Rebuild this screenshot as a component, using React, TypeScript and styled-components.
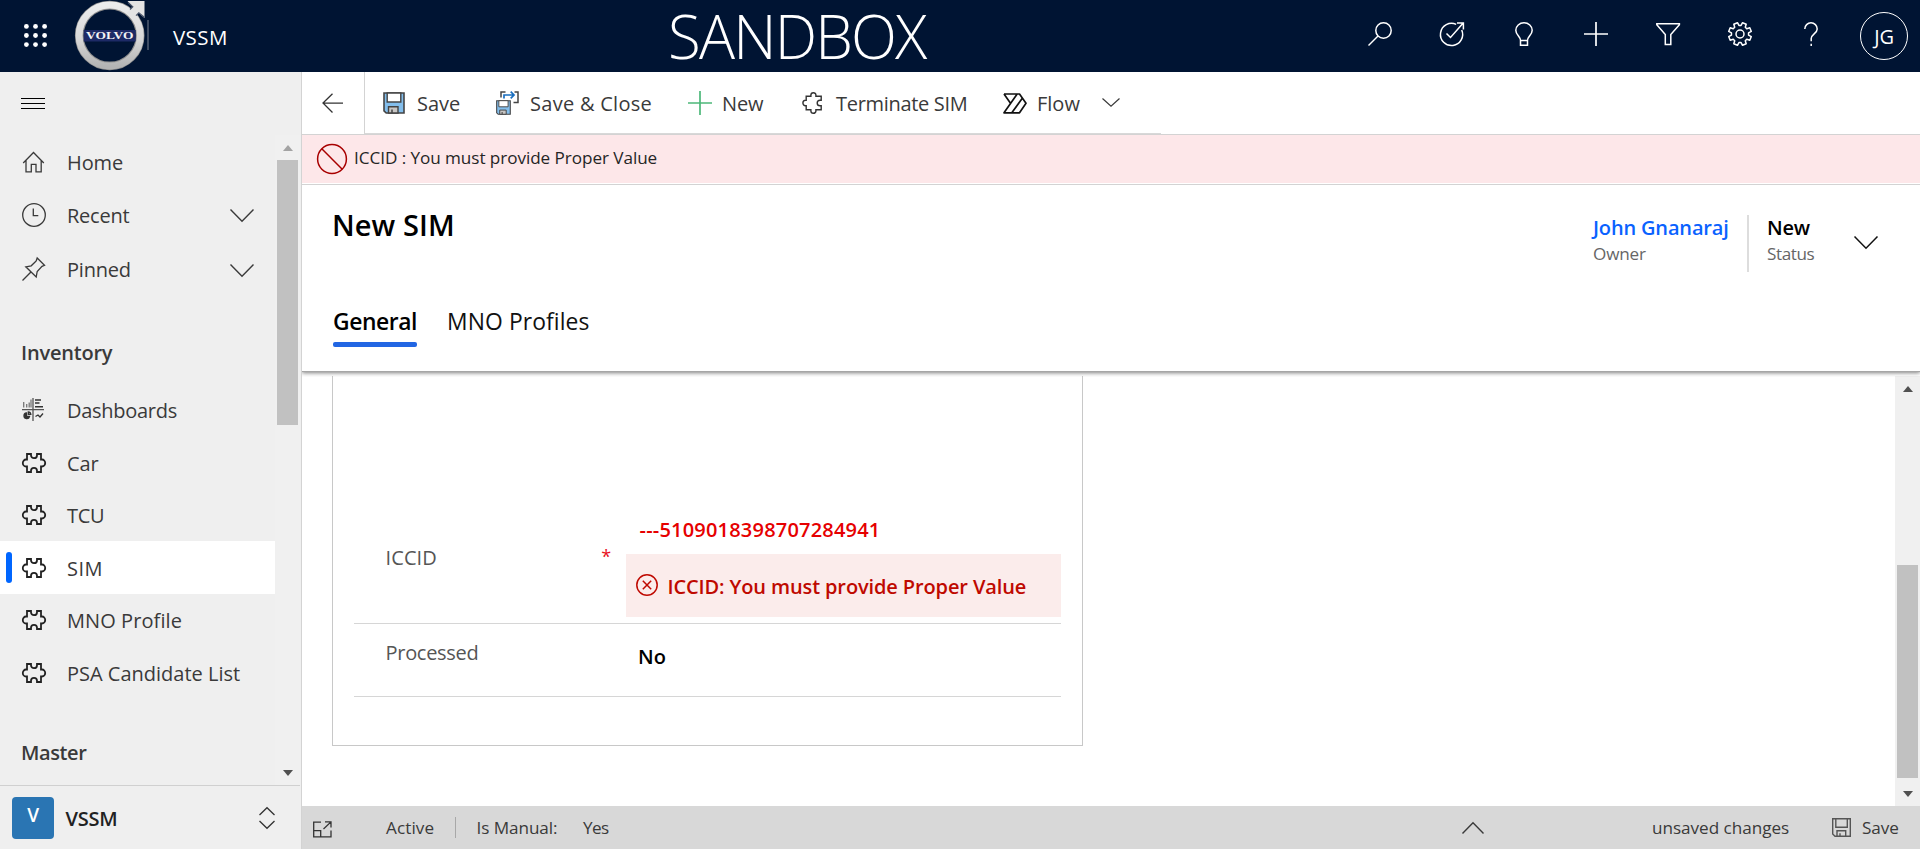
import React from 'react';
import styled, { createGlobalStyle } from 'styled-components';

const GlobalStyle = createGlobalStyle`
  * { box-sizing: border-box; }
  body {
    margin: 0;
    background: #fff;
    font-family: 'Open Sans', 'Noto Sans', sans-serif;
    font-size: 20px;
    color: #3a3a3a;
    overflow: hidden;
  }
  svg { display: block; flex: none; overflow: visible; }
`;

/* ---------- shared ---------- */

const Text = styled.span<{ $ls?: number; $size?: number; $weight?: number; $color?: string; $drop?: number }>`
  white-space: nowrap;
  line-height: 1.3;
  font-size: ${p => p.$size ?? 20}px;
  font-weight: ${p => p.$weight ?? 400};
  letter-spacing: ${p => p.$ls ?? -0.1}px;
  color: ${p => p.$color ?? 'inherit'};
  padding-top: ${p => p.$drop ?? 0}px;
`;

const Page = styled.div`
  width: 1920px;
  height: 849px;
  display: flex;
  flex-direction: column;
`;

const Body = styled.div`
  flex: 1;
  display: flex;
  min-height: 0;
`;

/* ---------- top bar ---------- */

const TopBar = styled.header`
  height: 72px;
  flex: none;
  display: flex;
  align-items: center;
  background: #001433;
  color: #fff;
`;

const Brand = styled.div`
  width: 670px;
  height: 72px;
  display: flex;
  align-items: center;
  padding-left: 24px;
`;

const LogoSlot = styled.div`
  margin-left: 27px;
  width: 72px;
  height: 72px;
`;

const BrandRule = styled.div`
  width: 2px;
  height: 30px;
  margin: 0 24px 2px 0;
  background: #3d4b62;
`;

const EnvironmentName = styled.div`
  flex: 1;
  font-size: 60px;
  font-weight: 300;
  line-height: 72px;
  letter-spacing: -1.8px;
  margin-left: -2px;
`;

const TopActions = styled.div`
  display: flex;
  align-items: center;
  padding-right: 12px;
`;

const TopAction = styled.div`
  width: 72px;
  height: 72px;
  display: flex;
  justify-content: center;
  padding-top: 22px;
`;

const Avatar = styled.div`
  width: 48px;
  height: 48px;
  margin-left: 12px;
  border: 1.3px solid #fff;
  border-radius: 50%;
  display: flex;
  align-items: center;
  justify-content: center;
  padding-top: 1px;
`;

/* ---------- sidebar ---------- */

const Sidebar = styled.nav`
  width: 302px;
  flex: none;
  display: flex;
  flex-direction: column;
  background: #efefef;
  border-right: 1px solid #d3d3d3;
`;

const MenuToggle = styled.div`
  height: 63px;
  flex: none;
  display: flex;
  flex-direction: column;
  gap: 4px;
  padding: 26px 0 0 21px;
`;

const MenuLine = styled.div`
  width: 24px;
  height: 1px;
  background: #000;
`;

const NavScroll = styled.div`
  flex: 1;
  min-height: 0;
  display: flex;
`;

const NavList = styled.div`
  width: 275px;
  overflow: hidden;
`;

const NavRow = styled.div<{ $active?: boolean; $height?: number }>`
  height: ${p => p.$height ?? 52.5}px;
  display: flex;
  align-items: center;
  padding: 1px 21px 0 6px;
  background: ${p => (p.$active ? '#fff' : 'transparent')};
`;

const NavMarker = styled.div<{ $active?: boolean }>`
  width: 6px;
  height: 31px;
  margin-right: 10px;
  border-radius: 3px;
  background: ${p => (p.$active ? '#0066ff' : 'transparent')};
`;

const NavIcon = styled.div`
  width: 45px;
  flex: none;
`;

const NavLabel = styled(Text)`
  flex: 1;
`;

const NavHeading = styled.div<{ $top: number; $height: number }>`
  height: ${p => p.$height}px;
  margin-top: ${p => p.$top}px;
  padding: 0 0 4px 21px;
  display: flex;
  align-items: center;
`;

const AreaSwitcher = styled.div`
  height: 64px;
  flex: none;
  width: 300px;
  border-top: 1px solid #d0d0d0;
  display: flex;
  align-items: center;
  padding: 0 25px 0 12px;
`;

const AreaTile = styled.div`
  width: 42px;
  height: 42px;
  border-radius: 4px;
  background: #2a75b3;
  color: #fff;
  display: flex;
  align-items: center;
  justify-content: center;
  padding-bottom: 5px;
  margin-right: 11.5px;
`;

const AreaName = styled.div`
  flex: 1;
  display: flex;
  padding-top: 2px;
`;

/* ---------- scrollbars ---------- */

const Track = styled.div`
  width: 25px;
  flex: none;
  background: #f0f0f0;
  display: flex;
  flex-direction: column;
  align-items: center;
`;

const Arrow = styled.div<{ $down?: boolean; $color: string }>`
  height: 25px;
  flex: none;
  display: flex;
  align-items: center;
  &::before {
    content: '';
    border-left: 5.5px solid transparent;
    border-right: 5.5px solid transparent;
    ${p => (p.$down ? 'border-top' : 'border-bottom')}: 6px solid ${p => p.$color};
  }
`;

const Thumb = styled.div<{ $before: number; $length: number }>`
  width: 21px;
  height: ${p => p.$length}px;
  margin-top: ${p => p.$before}px;
  background: #c1c1c1;
`;

const TrackRest = styled.div`
  flex: 1;
`;

/* ---------- main ---------- */

const Main = styled.main`
  flex: 1;
  min-width: 0;
  display: flex;
  flex-direction: column;
  background: #fff;
`;

const CommandBar = styled.div`
  height: 63px;
  flex: none;
  display: flex;
  align-items: flex-start;
  border-bottom: 1px solid #d3d3d3;
`;

const BackButton = styled.div`
  width: 62px;
  height: 62px;
  display: flex;
  padding: 20.5px 0 0 20px;
`;

const Commands = styled.div`
  display: flex;
  height: 62px;
  border-left: 1px solid #d3d3d3;
  border-bottom: 1px solid #d8d8d8;
`;

const Command = styled.div<{ $width: number }>`
  width: ${p => p.$width}px;
  height: 62px;
  padding: 0 0 0 18px;
  display: flex;
  align-items: center;
`;

const CommandIcon = styled.div`
  width: 24px;
  height: 24px;
  margin: 0 10px 0 0;
  display: flex;
  align-items: center;
`;

const CommandCaret = styled.div`
  margin-left: 22px;
  padding-bottom: 2px;
`;

const ErrorBanner = styled.div`
  height: 48px;
  flex: none;
  display: flex;
  align-items: center;
  gap: 6.5px;
  padding: 0 0 1px 13.5px;
  background: #fde7e9;
`;

const FormHeader = styled.div`
  height: 187px;
  flex: none;
  margin-top: 1px;
  border-top: 1px solid #d3d3d3;
  display: flex;
  justify-content: space-between;
  box-shadow: 0 1px 0 #a6a6a6, 0 2px 4px rgba(0, 0, 0, 0.5);
  clip-path: inset(0 0 -6px 0);
  background: #fff;
`;

const TitleColumn = styled.div`
  padding: 21px 0 0 31px;
  display: flex;
  flex-direction: column;
`;

const Title = styled.div`
  display: flex;
  margin-left: -1px;
`;

const Tabs = styled.div`
  display: flex;
  margin-top: 63px;
  gap: 30px;
`;

const TabBlock = styled.div`
  display: flex;
  flex-direction: column;
`;

const TabUnderline = styled.div`
  width: 84px;
  height: 5px;
  margin-top: 6px;
  border-radius: 2px;
  background: #2266e3;
`;

const HeaderFields = styled.div`
  display: flex;
  align-items: flex-start;
  padding: 30px 42px 0 0;
`;

const HeaderField = styled.div<{ $width: number }>`
  width: ${p => p.$width}px;
  padding-left: 1px;
  display: flex;
  flex-direction: column;
`;

const HeaderRule = styled.div`
  width: 2px;
  height: 57px;
  margin-right: 17px;
  background: #ddd;
`;

const HeaderCaret = styled.div`
  padding-top: 21px;
  color: #111;
`;

const FormScroll = styled.div`
  flex: 1;
  min-height: 0;
  display: flex;
  justify-content: space-between;
  padding-top: 5px;
`;

const Section = styled.section`
  width: 751px;
  height: 370px;
  margin-left: 30px;
  padding: 128px 21px 0;
  border: 1px solid #c8c8c8;
  border-top: 0;
`;

const FieldRow = styled.div<{ $height: number }>`
  height: ${p => p.$height}px;
  border-bottom: 1px solid #d6d6d6;
  display: flex;
`;

const FieldLabel = styled.div<{ $top: number }>`
  width: 272px;
  flex: none;
  padding: ${p => p.$top}px 15px 0 31.5px;
  display: flex;
  justify-content: space-between;
  color: #555;
`;

const FieldValue = styled.div<{ $top: number }>`
  flex: 1;
  padding-top: ${p => p.$top}px;
  display: flex;
  flex-direction: column;
`;

const FieldText = styled.div<{ $left?: number }>`
  padding-left: ${p => p.$left ?? 12}px;
  display: flex;
`;

const FieldError = styled.div`
  height: 63px;
  margin-top: 11px;
  padding-left: 10px;
  display: flex;
  align-items: center;
  gap: 9.5px;
  background: #fbeceb;
`;

const StatusBar = styled.footer`
  height: 43px;
  flex: none;
  display: flex;
  align-items: center;
  background: #d8d8d8;
`;

const StatusCell = styled.div<{ $width: number }>`
  width: ${p => p.$width}px;
  flex: none;
  display: flex;
`;

const PopOutCell = styled(StatusCell)`
  padding: 3px 0 0 11px;
`;

const StatusRule = styled.div`
  width: 1px;
  height: 21px;
  margin-right: 20.5px;
  background: #a8a8a8;
`;

/* ---------- icons ---------- */

const Waffle = () => (
  <svg width="24" height="24" fill="#fff">
    {[2.4, 11.5, 20.6].map(y => [2.4, 11.5, 20.6].map(x => <circle key={`${x}-${y}`} cx={x} cy={y} r="2.4" />))}
  </svg>
);

const Logo = () => (
  <svg width="72" height="72" viewBox="0 0 72 72">
    <defs>
      <linearGradient id="steel" x1="0" y1="0" x2="0" y2="1">
        <stop offset="0" stopColor="#ececec" />
        <stop offset="0.55" stopColor="#d8d8d8" />
        <stop offset="1" stopColor="#b4b4b4" />
      </linearGradient>
    </defs>
    <circle cx="34.700" cy="35.500" r="30.400" fill="#001433" stroke="#8e8e8e" strokeWidth="8.800" />
    <circle cx="34.700" cy="35.500" r="30.600" fill="none" stroke="url(#steel)" strokeWidth="7" />
    <path d="M52.500 1h17v17l-5.800-5-6.400 6.500-6-6.200 6.500-6.500z" fill="#e4e4e4" />
    <path d="M53 2.500l4.800 4.200-2.800 2.800M69 17l-5.200-4.300-2.800 2.900" fill="none" stroke="#4a566b" strokeWidth="1.200" />
    <rect x="8.700" y="30" width="52" height="11.500" fill="#1d2a66" />
    <text x="11" y="39.200" textLength="47.500" lengthAdjust="spacingAndGlyphs" fontFamily="'Liberation Serif', serif" fontWeight="700" fontSize="10" fill="#f4f4f4">VOLVO</text>
  </svg>
);

const line = { fill: 'none', stroke: 'currentColor', strokeWidth: 1.5 } as const;

const SearchIcon = () => (
  <svg width="24" height="24" {...line}>
    <circle cx="15.500" cy="8.500" r="7.700" /><path d="M10 14L0.500 23.500" />
  </svg>
);
const TargetIcon = () => (
  <svg width="24" height="24" {...line}>
    <path d="M16.200 2.400A11.100 11.100 0 1 0 21.700 8" /><path d="M6.500 11.500l4 4L23 1.200M17 1h6.400v6.400" />
  </svg>
);
const BulbIcon = () => (
  <svg width="19" height="24" {...line}>
    <path d="M5.500 18.500c0-4-4.700-5.500-4.700-10.200a8.200 7.600 0 0 1 16.400 0c0 4.700-4.700 6.200-4.700 10.200v4.700h-7zM5.500 18.500h7" />
  </svg>
);
const PlusIcon = ({ color = '#fff' }: { color?: string }) => (
  <svg width="24" height="24" fill="none" stroke={color} strokeWidth="1.700"><path d="M12 0v24M0 12h24" /></svg>
);
const FunnelIcon = () => (
  <svg width="24" height="24" {...line}><path d="M0.800 1.800h22.600v1L14.800 12.500v10H9.300v-10L0.800 2.800z" /></svg>
);
const GearIcon = () => {
  const pts: string[] = [];
  for (let i = 0; i < 8; i++) {
    const a = (i * Math.PI) / 4 + Math.PI / 8;
    [[-0.27, 8.6], [-0.17, 11.6], [0.17, 11.6], [0.27, 8.6]].forEach(([d, r]) =>
      pts.push(`${(12 + r * Math.cos(a + d)).toFixed(2)},${(12 + r * Math.sin(a + d)).toFixed(2)}`));
  }
  return (
    <svg width="24" height="24" {...line}>
      <polygon points={pts.join(' ')} strokeLinejoin="round" /><circle cx="12" cy="12" r="4" />
    </svg>
  );
};
const QuestionIcon = () => (
  <svg width="16" height="24" {...line}>
    <path d="M0.800 7a6.200 6.200 0 1 1 12.400 0c0 4.600-6 5.200-6 9.600v2.600M7.200 21.800v2.200" />
  </svg>
);

const Chevron = ({ w, h, up, sw = 1.4 }: { w: number; h: number; up?: boolean; sw?: number }) => (
  <svg width={w} height={h} fill="none" stroke="currentColor" strokeWidth={sw}>
    <path d={up ? `M0.500 ${h - 0.5}L${w / 2} 0.700L${w - 0.5} ${h - 0.5}` : `M0.500 0.500L${w / 2} ${h - 0.7}L${w - 0.5} 0.500`} />
  </svg>
);

const HomeIcon = () => (
  <svg width="22" height="22" viewBox="0 0 22 22" {...line} strokeWidth={1.3}>
    <path d="M0.700 11L11 0.500 21.300 11M3.500 8.500v11.300h5.300v-7.500h4.700v7.500h5.200V8.500" transform="translate(0.5 0)" />
  </svg>
);
const ClockIcon = () => (
  <svg width="24" height="24" {...line} strokeWidth={1.3}><circle cx="12" cy="11" r="11.300" /><path d="M11.300 4.500v7.200h5" /></svg>
);
const PinIcon = () => (
  <svg width="24" height="24" {...line} strokeWidth={1.3}>
    <path d="M15.200 0L22.500 7.300 20 8.300l-4.800 5.200-1 5.500L3.800 8.800l5.400-1L14.200 3zM8.700 14.200L0.500 22.500" />
  </svg>
);
const DashboardIcon = () => (
  <svg width="22" height="24" viewBox="0 0 22 24" fill="none" stroke="#333" strokeWidth="1.300">
    <path d="M11 0v23M0 11.700h22" stroke="#555" />
    <path d="M1.700 9.500V4M4.700 9.500V6M7.200 9.500V4.500M9 9.500V1.500" stroke="#777" />
    <path d="M13 2h6M13 5h4.500M13 8.700h8" strokeWidth="1.600" />
    <path d="M4.500 15a2.800 2.800 0 1 0 3 3.500h-3z" fill="#333" />
    <path d="M6.300 14v2.300h2.500a2.600 2.600 0 0 0-2.500-2.300zM13.500 18.500l2.500-1.500 2 2 3-3.500" />
  </svg>
);
const PuzzleIcon = () => (
  <svg width="24" height="20" fill="none" stroke="#222" strokeWidth="1.800">
    <path d="M5 1h4v1.200a3 3 0 0 0 6 0V1h4v5.500h1a3.200 3.500 0 0 1 0 7h-1V19h-4v-1.200a3 3 0 0 0-6 0V19H5v-5.500H4a3.200 3.500 0 0 1 0-7h1z" />
  </svg>
);
const PuzzleUprightIcon = () => (
  <svg width="20" height="22" viewBox="-0.700 0 20 22" fill="none" stroke="#333" strokeWidth="1.400">
    <path d="M3.500 4.200h4.700V3a2.500 2.300 0 0 1 5 0v1.200H18.500v4h-1.200a2.700 2.700 0 0 0 0 5.600h1.200v4h-5.300V19a2.500 2.300 0 0 1-5 0v-1.200H3.500v-4H2.800a2.600 2.800 0 0 1 0-5.600h0.700z" />
  </svg>
);
const BackIcon = () => (
  <svg width="22" height="20" fill="none" stroke="#333" strokeWidth="1.300"><path d="M10.500 0.700L1 10l9.500 9.500M1 10.200h20" /></svg>
);
const DiskShape = () => (
  <>
    <path d="M1 1h20v20H3.200L1 18.800z" fill="#83beec" stroke="#444" strokeWidth="1.600" />
    <path d="M4.200 1h13.600v9H4.200z" fill="#fff" stroke="#444" strokeWidth="1.400" />
    <path d="M5.500 21v-6.200h9.500V21z" fill="#c8c6c4" stroke="#444" strokeWidth="1.400" />
    <path d="M9 21v-3.500" stroke="#444" strokeWidth="1.500" />
  </>
);
const DiskIcon = () => <svg width="22" height="22" viewBox="0 0 22 22"><DiskShape /></svg>;
const SaveCloseIcon = () => (
  <svg width="24" height="24" viewBox="0 0 24 24" fill="none" stroke="#444" strokeWidth="1.500">
    <path d="M5 6.500V1h4.500M18.500 1H22v10.500h-4.500" />
    <path d="M8 7.500V4h10M14.700 0.700L18 4l-3.300 3.300" stroke="#1a6fc0" strokeWidth="1.700" />
    <g transform="translate(0 9) scale(0.68)"><DiskShape /></g>
  </svg>
);
const FlowIcon = () => (
  <svg width="24" height="21" fill="none" stroke="#111" strokeWidth="1.700" strokeLinejoin="round">
    <path d="M1 1h15.500L23 10.300 16.500 19.800H1L14 1.200M1 1l6.500 9.300M8.800 19.800L19.300 5.200" />
  </svg>
);
const BlockIcon = () => (
  <svg width="32" height="32" fill="none" stroke="#a80000" strokeWidth="1.500"><circle cx="16" cy="16" r="14.400" /><path d="M5.800 5.800L26.200 26.200" /></svg>
);
const ErrorIcon = () => (
  <svg width="22" height="22" fill="none" stroke="#bf0900" strokeWidth="1.500"><circle cx="11" cy="10" r="10.200" /><path d="M6.800 5.800l8.400 8.400M15.200 5.800l-8.400 8.400" /></svg>
);
const PopOutIcon = () => (
  <svg width="19" height="17" fill="none" stroke="#333" strokeWidth="1.300">
    <path d="M8 1.200H0.700v14.600H18V9.500M0.700 9.700h7v6M10.500 8L18 0.900M12 0.900h6v5.500" />
  </svg>
);
const DiskOutlineIcon = () => (
  <svg width="19" height="19" fill="none" stroke="#555" strokeWidth="1.400">
    <path d="M0.700 0.700h17.600v17.600H3L0.700 16zM3.800 0.700v8.500h11.500V0.700M5 18.300v-5.500h8.700v5.500M8 18.300v-3" />
  </svg>
);
const UpDownIcon = () => (
  <svg width="16" height="22" fill="none" stroke="#333" strokeWidth="1.300">
    <path d="M0.500 8L8 0.700 15.500 8M0.500 14L8 21.300 15.500 14" />
  </svg>
);

/* ---------- data ---------- */

const topIcons = [SearchIcon, TargetIcon, BulbIcon, () => <PlusIcon />, FunnelIcon, GearIcon, QuestionIcon];

const inventory = [
  { label: 'Dashboards', icon: DashboardIcon, ls: -0.28 },
  { label: 'Car', icon: PuzzleIcon, ls: -0.1 },
  { label: 'TCU', icon: PuzzleIcon, ls: -0.31 },
  { label: 'SIM', icon: PuzzleIcon, ls: 0.45, active: true },
  { label: 'MNO Profile', icon: PuzzleIcon, ls: 0.08 },
  { label: 'PSA Candidate List', icon: PuzzleIcon, ls: 0 },
];

const commands = [
  { label: 'Save', icon: DiskIcon, ls: 0, width: 113 },
  { label: 'Save & Close', icon: SaveCloseIcon, ls: 0.28, width: 192 },
  { label: 'New', icon: () => <PlusIcon color="#4db87a" />, ls: -0.1, width: 114 },
  { label: 'Terminate SIM', icon: PuzzleUprightIcon, ls: -0.31, width: 201 },
];

export default function App() {
  return (
    <Page>
      <GlobalStyle />
      <TopBar>
        <Brand>
          <Waffle />
          <LogoSlot><Logo /></LogoSlot>
          <BrandRule />
          <Text $size={20.5} $ls={0.4} $drop={2}>VSSM</Text>
        </Brand>
        <EnvironmentName>SANDBOX</EnvironmentName>
        <TopActions>
          {topIcons.map((Icon, i) => <TopAction key={i}><Icon /></TopAction>)}
          <Avatar><Text $ls={-0.1}>JG</Text></Avatar>
        </TopActions>
      </TopBar>
      <Body>
        <Sidebar>
          <MenuToggle><MenuLine /><MenuLine /><MenuLine /></MenuToggle>
          <NavScroll>
            <NavList>
              <NavRow $height={54}>
                <NavMarker /><NavIcon><HomeIcon /></NavIcon><NavLabel>Home</NavLabel>
              </NavRow>
              <NavRow $height={52}>
                <NavMarker /><NavIcon><ClockIcon /></NavIcon><NavLabel $ls={-0.23}>Recent</NavLabel><Chevron w={24} h={13} />
              </NavRow>
              <NavRow $height={57}>
                <NavMarker /><NavIcon><PinIcon /></NavIcon><NavLabel $ls={-0.2}>Pinned</NavLabel><Chevron w={24} h={13} />
              </NavRow>
              <NavHeading $top={29} $height={56.5}><Text $weight={600} $ls={-0.2}>Inventory</Text></NavHeading>
              {inventory.map(({ label, icon: Icon, ls, active }) => (
                <NavRow key={label} $active={active}>
                  <NavMarker $active={active} /><NavIcon><Icon /></NavIcon><NavLabel $ls={ls} $drop={2}>{label}</NavLabel>
                </NavRow>
              ))}
              <NavHeading $top={28} $height={56}><Text $weight={600} $ls={-0.4}>Master</Text></NavHeading>
            </NavList>
            <Track>
              <Arrow $color="#a3a3a3" />
              <Thumb $before={0} $length={265} />
              <TrackRest />
              <Arrow $down $color="#505050" />
            </Track>
          </NavScroll>
          <AreaSwitcher>
            <AreaTile><Text $weight={600} $size={19}>V</Text></AreaTile>
            <AreaName><Text $weight={600} $ls={-0.2} $color="#222">VSSM</Text></AreaName>
            <UpDownIcon />
          </AreaSwitcher>
        </Sidebar>
        <Main>
          <CommandBar>
            <BackButton><BackIcon /></BackButton>
            <Commands>
              {commands.map(({ label, icon: Icon, ls, width }) => (
                <Command key={label} $width={width}>
                  <CommandIcon><Icon /></CommandIcon><Text $ls={ls} $drop={1}>{label}</Text>
                </Command>
              ))}
              <Command $width={176}>
                <CommandIcon><FlowIcon /></CommandIcon><Text $ls={0} $drop={1}>Flow</Text>
                <CommandCaret><Chevron w={18} h={9} sw={1.2} /></CommandCaret>
              </Command>
            </Commands>
          </CommandBar>
          <ErrorBanner>
            <BlockIcon />
            <Text $size={17.14} $ls={-0.06} $color="#252525">ICCID : You must provide Proper Value</Text>
          </ErrorBanner>
          <FormHeader>
            <TitleColumn>
              <Title><Text $size={29} $weight={600} $ls={0.1} $color="#000">New SIM</Text></Title>
              <Tabs>
                <TabBlock>
                  <Text $size={22.86} $weight={600} $ls={-0.42} $color="#000">General</Text>
                  <TabUnderline />
                </TabBlock>
                <TabBlock>
                  <Text $size={22.86} $ls={0.1} $color="#111">MNO Profiles</Text>
                </TabBlock>
              </Tabs>
            </TitleColumn>
            <HeaderFields>
              <HeaderField $width={155}>
                <Text $weight={600} $ls={-0.16} $color="#0a62ff">John Gnanaraj</Text>
                <Text $size={17.14} $ls={-0.18} $color="#666" $drop={2}>Owner</Text>
              </HeaderField>
              <HeaderRule />
              <HeaderField $width={88}>
                <Text $weight={600} $ls={-0.2} $color="#000">New</Text>
                <Text $size={17.14} $ls={-0.4} $color="#666" $drop={2}>Status</Text>
              </HeaderField>
              <HeaderCaret><Chevron w={24} h={13} sw={1.5} /></HeaderCaret>
            </HeaderFields>
          </FormHeader>
          <FormScroll>
            <Section>
              <FieldRow $height={120}>
                <FieldLabel $top={41}>
                  <Text $ls={0.1}>ICCID</Text>
                  <Text $size={18} $color="#e81123">*</Text>
                </FieldLabel>
                <FieldValue $top={13}>
                  <FieldText $left={13.5}><Text $weight={600} $ls={0.2} $color="#e60000">---5109018398707284941</Text></FieldText>
                  <FieldError>
                    <ErrorIcon />
                    <Text $weight={600} $ls={-0.12} $color="#bf0900" $drop={3}>ICCID: You must provide Proper Value</Text>
                  </FieldError>
                </FieldValue>
              </FieldRow>
              <FieldRow $height={73}>
                <FieldLabel $top={16}><Text $ls={-0.29}>Processed</Text></FieldLabel>
                <FieldValue $top={19.5}>
                  <FieldText><Text $weight={600} $ls={0.2} $color="#000">No</Text></FieldText>
                </FieldValue>
              </FieldRow>
            </Section>
            <Track>
              <Arrow $color="#505050" />
              <Thumb $before={164} $length={213} />
              <TrackRest />
              <Arrow $down $color="#505050" />
            </Track>
          </FormScroll>
          <StatusBar>
            <PopOutCell $width={84}><PopOutIcon /></PopOutCell>
            <StatusCell $width={69}><Text $size={17.14} $ls={0.1} $drop={1}>Active</Text></StatusCell>
            <StatusRule />
            <StatusCell $width={106.5}><Text $size={17.14} $ls={-0.07} $drop={1}>Is Manual:</Text></StatusCell>
            <StatusCell $width={878.5}><Text $size={17.14} $ls={-0.6} $drop={1}>Yes</Text></StatusCell>
            <StatusCell $width={190.5}><Chevron w={22} h={12} up /></StatusCell>
            <StatusCell $width={179.5}><Text $size={17.14} $ls={-0.03} $drop={1}>unsaved changes</Text></StatusCell>
            <StatusCell $width={30.5}><DiskOutlineIcon /></StatusCell>
            <Text $size={17.14} $ls={-0.05} $drop={1}>Save</Text>
          </StatusBar>
        </Main>
      </Body>
    </Page>
  );
}
